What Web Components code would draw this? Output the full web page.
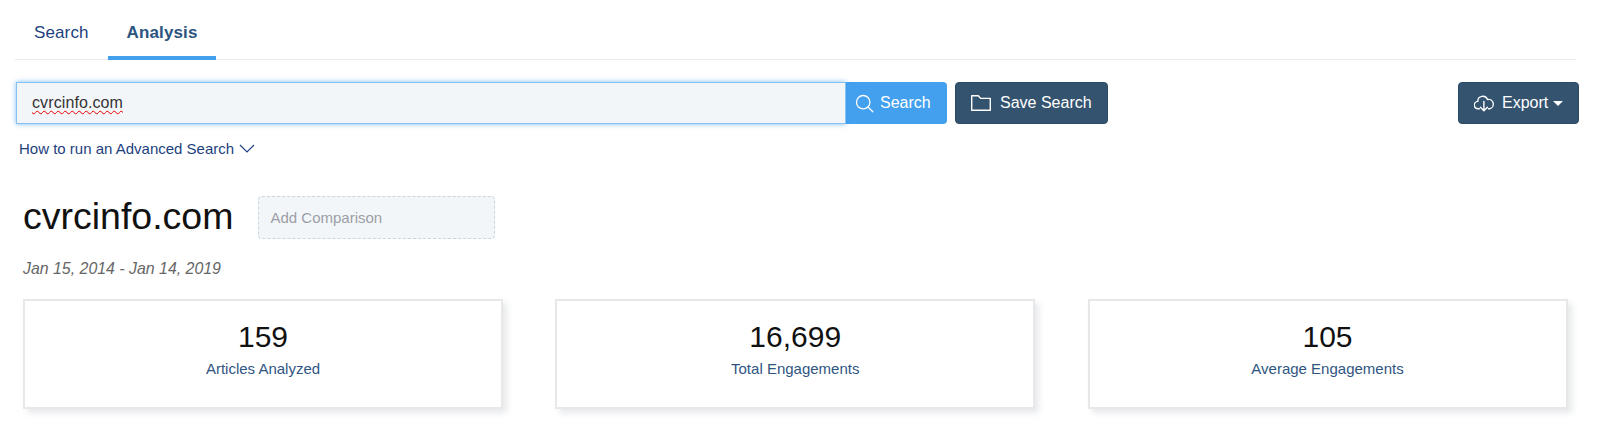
<!DOCTYPE html>
<html lang="en">
<head>
<meta charset="utf-8">
<title>Analysis</title>
<style>
  html, body { margin: 0; padding: 0; background: #fff; }
  body { font-family: "Liberation Sans", Arial, sans-serif; color: #111; height: 432px; overflow: hidden; }
</style>
</head>
<body>
<app-page>
  <app-tabs>
    <tab-item>Search</tab-item>
    <tab-item active>Analysis</tab-item>
  </app-tabs>
  <search-bar value="cvrcinfo.com"></search-bar>
  <advanced-link>How to run an Advanced Search</advanced-link>
  <report-head title="cvrcinfo.com" range="Jan 15, 2014 - Jan 14, 2019"></report-head>
  <stat-row>
    <stat-card value="159" label="Articles Analyzed"></stat-card>
    <stat-card value="16,699" label="Total Engagements"></stat-card>
    <stat-card value="105" label="Average Engagements"></stat-card>
  </stat-row>
</app-page>

<script>
// Small helper, every element renders the same way
class Base extends HTMLElement {
  constructor() {
    super();
    this.attachShadow({ mode: 'open' });
  }
  connectedCallback() {
    this.shadowRoot.innerHTML = this.render();
  }
  attr(name) {
    return this.getAttribute(name) || '';
  }
}

class AppPage extends Base {
  render() {
    return `<style>
      :host { display: block; padding: 0 21px 0 15px; }
    </style><slot></slot>`;
  }
}

class AppTabs extends Base {
  render() {
    return `<style>
      :host { display: flex; height: 59px; margin-right: 3px; border-bottom: 1px solid #e6e9ed; box-sizing: content-box; }
    </style><slot></slot>`;
  }
}

class TabItem extends Base {
  render() {
    const active = this.hasAttribute('active');
    return `<style>
      :host {
        display: flex; align-items: center; box-sizing: border-box; height: 60px;
        padding: 9px 19px 0; font-size: 17px; letter-spacing: .12px;
        color: ${active ? '#2b5580' : '#1d3f7e'};
        font-weight: ${active ? 'bold' : 'normal'};
        border-bottom: 4px solid ${active ? '#42a0ee' : 'transparent'};
      }
    </style><slot></slot>`;
  }
}

const ICON_SEARCH = `<svg width="19" height="19" viewBox="0 0 19 19" fill="none" stroke="#fff" stroke-width="1.3"><circle cx="8.2" cy="8.2" r="6.7"/><path d="M13 13l4.8 4.8" stroke-linecap="round"/></svg>`;
const ICON_FOLDER = `<svg width="20" height="16" viewBox="0 0 20 16" fill="none" stroke="#fff" stroke-width="1.4"><path d="M.7.8h6.6l2.3 2.6h9.7v11.8H.7z" stroke-linejoin="round"/></svg>`;
const ICON_CLOUD = `<svg width="20" height="17" viewBox="0 0 20 17" fill="none" stroke="#fff" stroke-width="1.4" stroke-linecap="round" stroke-linejoin="round"><path d="M5.4 13.8H4.2A3.5 3.5 0 0 1 3.8 6.4 5 5 0 0 1 13.5 4.6 4.6 4.6 0 0 1 15.6 13.8H14.4"/><path d="M9.9 6.4v9.2M6.4 12.2l3.5 3.5 3.5-3.5"/></svg>`;

class SearchBar extends Base {
  render() {
    return `<style>
      :host { display: flex; align-items: stretch; height: 42px; margin: 22px 0 0 1px; }
      .field {
        width: 830px; box-sizing: border-box; display: flex; align-items: center;
        padding: 0 15px; background: #f3f6f9; border: 1px solid #86c1f1;
        box-shadow: 0 0 5px rgba(66,160,238,.7); font-size: 16px; letter-spacing: .1px; color: #333;
      }
      .field span { text-decoration: underline wavy #e80000 1px; text-underline-offset: 2px; }
      .btn {
        display: flex; align-items: center; box-sizing: border-box; color: #fff;
        font-size: 16px; border-radius: 0 4px 4px 0;
      }
      .go { width: 101px; padding-left: 9px; gap: 6px; background: #42a0ee; position: relative; }
      .dark { background: #34536f; border: 1px solid #2a4a68; border-radius: 4px; }
      .save { width: 153px; margin-left: 8px; padding-left: 15px; gap: 9px; }
      .export { width: 121px; margin-left: auto; padding-left: 15px; gap: 8px; }
      .caret { width: 0; height: 0; border: 5px solid transparent; border-top: 5px solid #fff; border-bottom: 0; margin-left: -3px; }
    </style>
    <div class="field"><span>${this.attr('value')}</span></div>
    <div class="btn go">${ICON_SEARCH}<span>Search</span></div>
    <div class="btn dark save">${ICON_FOLDER}<span>Save Search</span></div>
    <div class="btn dark export">${ICON_CLOUD}<span>Export</span><i class="caret"></i></div>`;
  }
}

class AdvancedLink extends Base {
  render() {
    return `<style>
      :host {
        display: flex; align-items: center; gap: 5px; height: 20px; margin: 14px 0 0 4px;
        font-size: 15px; color: #1d3f7e;
      }
    </style><slot></slot>
    <svg width="16" height="9" viewBox="0 0 16 9" fill="none" stroke="#1d3f7e" stroke-width="1.1"><path d="M1 1l7 7 7-7"/></svg>`;
  }
}

class ReportHead extends Base {
  render() {
    return `<style>
      :host { display: block; margin: 38px 0 0 8px; }
      .top { display: flex; align-items: center; gap: 25px; height: 43px; }
      h1 { margin: -2px 0 0; font-size: 37.5px; font-weight: normal; color: #111; }
      .add {
        width: 237px; height: 43px; box-sizing: border-box; display: flex; align-items: center;
        padding-left: 11px; background: #f3f6f9; border: 1px dashed #c9d6e2; border-radius: 4px;
        font-size: 15px; color: #9b9fa6;
      }
      p { margin: 21px 0 0; font-size: 15.9px; line-height: 18px; font-style: italic; color: #666; }
    </style>
    <div class="top"><h1>${this.attr('title')}</h1><div class="add">Add Comparison</div></div>
    <p>${this.attr('range')}</p>`;
  }
}

class StatRow extends Base {
  render() {
    return `<style>
      :host { display: grid; grid-template-columns: repeat(3, 480px); column-gap: 52.25px; margin: 21px 0 0 8px; }
    </style><slot></slot>`;
  }
}

class StatCard extends Base {
  render() {
    return `<style>
      :host {
        display: block; box-sizing: border-box; height: 110px; padding-top: 19px; text-align: center;
        border: 2px solid #e8e8ea; background: #fff; box-shadow: 4px 4px 6px rgba(60,70,90,.12);
      }
      .v { font-size: 30px; line-height: 34px; color: #111; }
      .l { margin-top: 5px; font-size: 15px; line-height: 20px; color: #2f5582; }
    </style>
    <div class="v">${this.attr('value')}</div>
    <div class="l">${this.attr('label')}</div>`;
  }
}

customElements.define('app-page', AppPage);
customElements.define('app-tabs', AppTabs);
customElements.define('tab-item', TabItem);
customElements.define('search-bar', SearchBar);
customElements.define('advanced-link', AdvancedLink);
customElements.define('report-head', ReportHead);
customElements.define('stat-row', StatRow);
customElements.define('stat-card', StatCard);
</script>
</body>
</html>
